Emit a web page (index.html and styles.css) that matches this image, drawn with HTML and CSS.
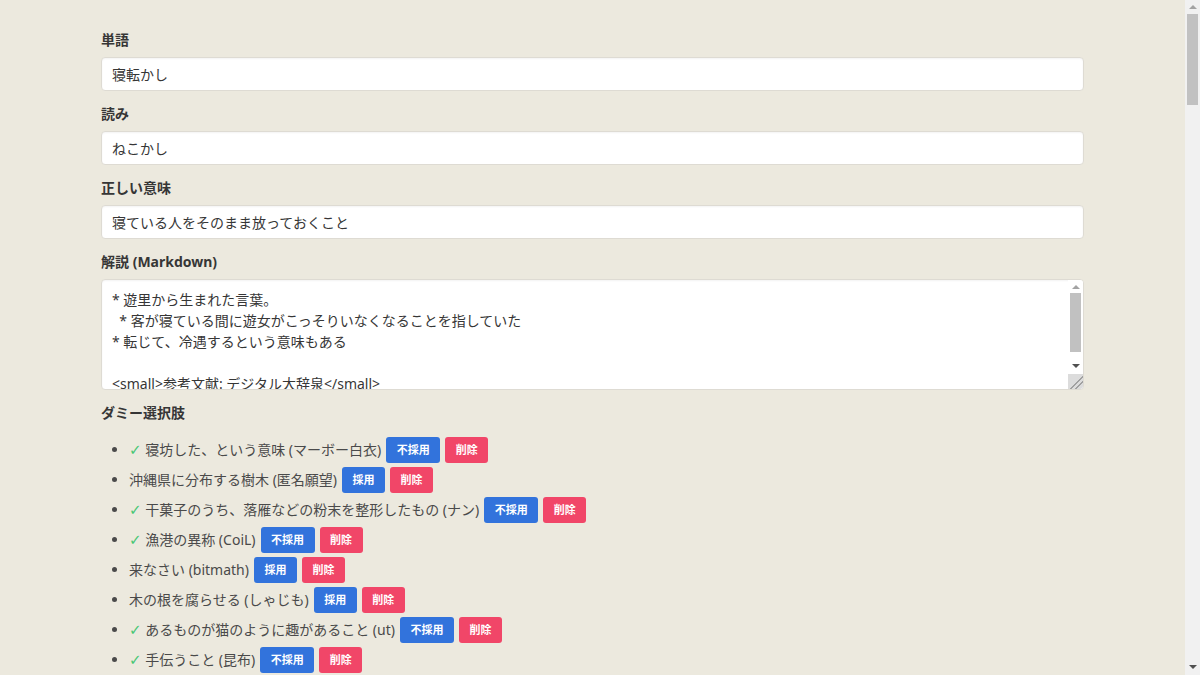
FILE: index.html
```html
<!DOCTYPE html>
<html lang="ja">
<head>
<meta charset="utf-8">
<title>単語の編集</title>
<link rel="stylesheet" href="styles.css">
</head>
<body>
<div class="page">
<main class="container">
  <div class="field">
    <label class="label">単語</label>
    <input class="input" type="text" value="寝転かし">
  </div>
  <div class="field">
    <label class="label">読み</label>
    <input class="input" type="text" value="ねこかし">
  </div>
  <div class="field">
    <label class="label">正しい意味</label>
    <input class="input" type="text" value="寝ている人をそのまま放っておくこと">
  </div>
  <div class="field">
    <label class="label">解説 (Markdown)</label>
    <div class="textarea-wrap">
      <textarea class="textarea">* 遊里から生まれた言葉。
  * 客が寝ている間に遊女がこっそりいなくなることを指していた
* 転じて、冷遇するという意味もある

&lt;small&gt;参考文献: デジタル大辞泉&lt;/small&gt;</textarea>
      <div class="ta-scroll">
        <span class="arrow-up dim"></span>
        <span class="ta-thumb"></span>
        <span class="arrow-down"></span>
        <span class="ta-grip"></span>
      </div>
    </div>
  </div>
  <div class="field">
    <label class="label">ダミー選択肢</label>
    <ul class="choices">
      <li><span class="check">✓</span> 寝坊した、という意味 (マーボー白衣)<button class="btn btn-link">不採用</button><button class="btn btn-danger">削除</button></li>
      <li>沖縄県に分布する樹木 (匿名願望)<button class="btn btn-link">採用</button><button class="btn btn-danger">削除</button></li>
      <li><span class="check">✓</span> 干菓子のうち、落雁などの粉末を整形したもの (ナン)<button class="btn btn-link">不採用</button><button class="btn btn-danger">削除</button></li>
      <li><span class="check">✓</span> 漁港の異称 (CoiL)<button class="btn btn-link">不採用</button><button class="btn btn-danger">削除</button></li>
      <li>来なさい (bitmath)<button class="btn btn-link">採用</button><button class="btn btn-danger">削除</button></li>
      <li>木の根を腐らせる (しゃじも)<button class="btn btn-link">採用</button><button class="btn btn-danger">削除</button></li>
      <li><span class="check">✓</span> あるものが猫のように趣があること (ut)<button class="btn btn-link">不採用</button><button class="btn btn-danger">削除</button></li>
      <li><span class="check">✓</span> 手伝うこと (昆布)<button class="btn btn-link">不採用</button><button class="btn btn-danger">削除</button></li>
    </ul>
  </div>
</main>
</div>
<div class="page-scroll">
  <span class="arrow-up"></span>
  <span class="page-thumb"></span>
  <span class="arrow-down"></span>
</div>
</body>
</html>
```
FILE: styles.css
```css
html {
  background: #ece9de;
}
body {
  margin: 0;
  font-family: "Noto Sans", "Noto Sans CJK JP", sans-serif;
  font-size: 14px;
  line-height: 1.5;
  color: #4a4a4a;
}
.page {
  margin-right: 15px;
}
.container {
  max-width: 983px;
  margin: 0 auto;
  padding-top: 28.5px;
}
.field {
  margin-bottom: 12px;
}
.label {
  display: block;
  font-weight: 700;
  color: #363636;
  margin-bottom: 7px;
  line-height: 21px;
}
.input,
.textarea {
  display: block;
  box-sizing: border-box;
  width: 100%;
  font-family: inherit;
  font-size: 14px;
  color: #363636;
  background: #fff;
  border: 1px solid #dedbd3;
  border-radius: 4px;
  box-shadow: inset 0 1px 2px rgba(10, 10, 10, 0.05);
  outline: none;
}
.input {
  height: 34px;
  padding: 0 10px;
}
.textarea-wrap {
  position: relative;
}
.textarea {
  height: 111px;
  padding: 9px 10px;
  line-height: 21px;
  resize: none;
  overflow: hidden;
}
.ta-scroll {
  position: absolute;
  top: 1px;
  right: 1px;
  bottom: 1px;
  width: 15px;
  background: #fff;
  display: flex;
  flex-direction: column;
  align-items: center;
  border-radius: 0 3px 3px 0;
  overflow: hidden;
}
.ta-scroll .arrow-up {
  margin-top: 5px;
}
.ta-thumb {
  width: 11px;
  height: 59px;
  margin-top: 4px;
  background: #c1c1c1;
}
.ta-scroll .arrow-down {
  margin-top: 12px;
}
.ta-grip {
  margin-top: auto;
  width: 15px;
  height: 15px;
  background:
    linear-gradient(135deg, transparent 55%, #a0a0a0 55%, #a0a0a0 61%, transparent 61%, transparent 72%, #a0a0a0 72%, #a0a0a0 78%, transparent 78%),
    #dcdcdc;
}
.arrow-up,
.arrow-down {
  display: block;
  width: 0;
  height: 0;
  border-left: 4px solid transparent;
  border-right: 4px solid transparent;
}
.arrow-up {
  border-bottom: 4px solid #505050;
}
.arrow-up.dim {
  border-bottom-color: #a3a3a3;
}
.arrow-down {
  border-top: 4px solid #505050;
}
.page-scroll {
  position: fixed;
  top: 0;
  right: 0;
  bottom: 0;
  width: 15px;
  background: #f1f1f1;
  display: flex;
  flex-direction: column;
  align-items: center;
}
.page-scroll .arrow-up {
  margin-top: 5px;
  border-bottom-color: #a3a3a3;
}
.page-thumb {
  width: 11px;
  height: 91px;
  margin-top: 5px;
  background: #c1c1c1;
}
.page-scroll .arrow-down {
  margin-top: auto;
  margin-bottom: 6px;
}
.choices {
  margin: 12px 0 0;
  padding-left: 28px;
  list-style: disc;
}
.choices li {
  line-height: 30px;
  height: 30px;
}
.check {
  color: #48c774;
  font-family: "DejaVu Sans", sans-serif;
  font-size: 15px;
}
.btn {
  display: inline-block;
  vertical-align: middle;
  height: 26px;
  margin-left: 5px;
  padding: 0 10.5px;
  border: none;
  border-radius: 3px;
  font-family: inherit;
  font-size: 11px;
  font-weight: 700;
  line-height: 26px;
  color: #fff;
  cursor: pointer;
  position: relative;
  top: -1px;
}
.btn-link {
  background: #3273dc;
}
.btn-danger {
  background: #f14668;
}
```
